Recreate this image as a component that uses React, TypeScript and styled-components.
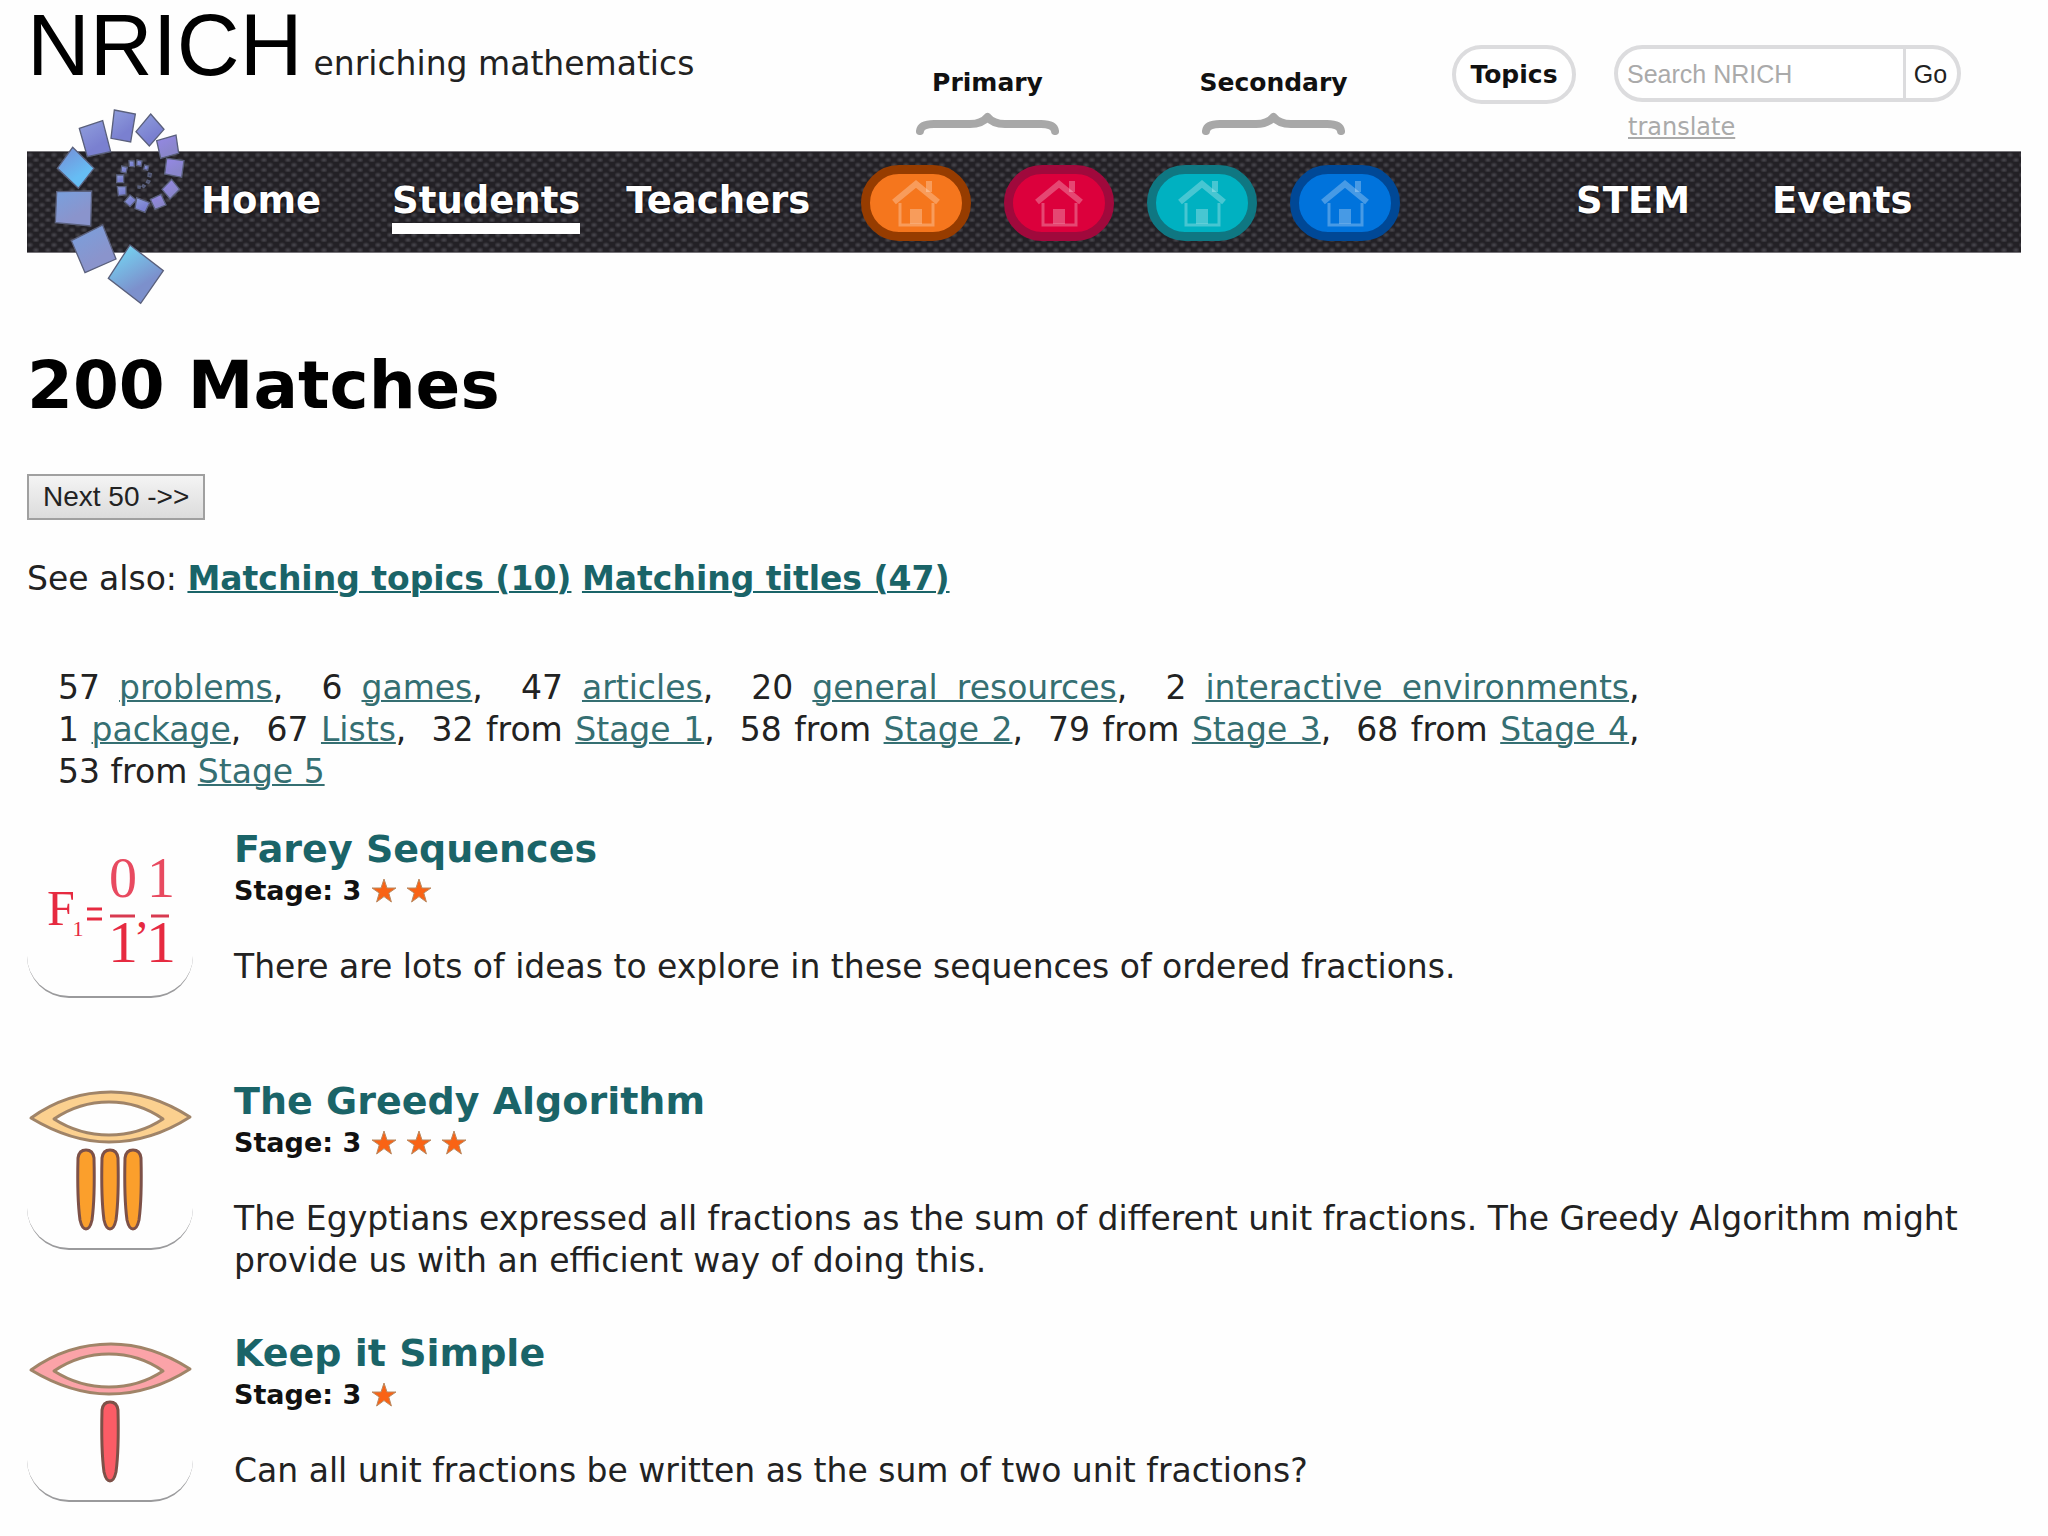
import React from "react";
import styled, { createGlobalStyle } from "styled-components";

const teal = "#1a6468";
const sans = `"DejaVu Sans", Verdana, sans-serif`;
const arial = `"Liberation Sans", Arial, sans-serif`;

const GlobalStyle = createGlobalStyle`
  *, *::before, *::after { box-sizing: border-box; }
  body { margin: 0; background: #fefefe; color: #222; font-family: ${sans}; font-size: 33px; line-height: 42px; }
`;

const Page = styled.div`
  padding: 0 27px;
`;

const headerColumns = "minmax(0, 1fr) 539px 621px";

const Header = styled.header`
  display: grid;
  grid-template-columns: ${headerColumns};
  height: 151px;
`;

const Brand = styled.div`
  display: flex;
  align-items: baseline;
  gap: 11px;
  padding-top: 1px;
  white-space: nowrap;
`;

const BrandName = styled.span`
  font: 87px/88px ${arial};
  color: #000;
`;

const Phases = styled.div`
  display: grid;
  grid-template-columns: 1fr 1fr;
  column-gap: 33px;
  padding-top: 62px;
`;

const Phase = styled.div`
  display: flex;
  flex-direction: column;
  align-items: center;
  gap: 7px;
  color: #111;
  font-size: 25px;
  font-weight: bold;
  line-height: 42px;
`;

const Tools = styled.div`
  display: flex;
  align-items: flex-start;
  gap: 38px;
  padding: 45px 0 0 52px;
`;

const TopicsButton = styled.button`
  width: 124px;
  height: 59px;
  padding: 0;
  border: 4px solid #dcdcde;
  border-radius: 30px;
  background: #fff;
  color: #111;
  font: bold 25px/50px ${sans};
`;

const SearchForm = styled.form`
  display: flex;
  width: 347px;
  height: 57px;
  border: 4px solid #dcdcde;
  border-radius: 29px;
  background: #fff;
  overflow: hidden;
`;

const SearchInput = styled.input`
  flex: 1;
  min-width: 0;
  padding: 0 0 0 9px;
  border: 0;
  background: transparent;
  font: 25px/48px ${arial};
  color: #222;
  &::placeholder { color: #aaa; opacity: 1; }
`;

const GoButton = styled.button`
  width: 54px;
  padding: 0 6px 0 4px;
  border: 0;
  border-left: 3px solid #dcdcde;
  background: transparent;
  color: #222;
  font: 25px/48px ${arial};
`;

const Translate = styled.a`
  display: block;
  padding-left: 14px;
  color: #aaa;
  font-size: 24px;
  line-height: 50px;
`;

const Nav = styled.nav`
  position: relative;
  display: grid;
  grid-template-columns: ${headerColumns};
  height: 102px;
  border: solid #77757a;
  border-width: 1px 0;
  background-color: #232126;
  background-image:
    radial-gradient(ellipse 4px 3px at 3px 3px, #4c4a51, transparent),
    radial-gradient(ellipse 4px 3px at 9px 8px, #4c4a51, transparent);
  background-size: 12px 10px;
`;

const NavGroup = styled.div<{ $start: number; $gap: number }>`
  display: flex;
  align-items: flex-start;
  gap: ${(p) => p.$gap}px;
  padding: 27px 0 0 ${(p) => p.$start}px;
`;

const NavLink = styled.a<{ $active?: boolean; $wide?: boolean }>`
  margin-right: ${(p) => (p.$wide ? 25 : 0)}px;
  border-bottom: 11px solid ${(p) => (p.$active ? "#fff" : "transparent")};
  color: #fff;
  font-size: 37px;
  font-weight: bold;
  line-height: 44px;
  text-decoration: none;
  text-shadow: 0 0 3px #000;
`;

const Stages = styled.div`
  display: flex;
  gap: 33px;
  padding-top: 13px;
`;

const StagePill = styled.a<{ $fill: string; $rim: string }>`
  display: flex;
  justify-content: center;
  align-items: center;
  width: 110px;
  height: 76px;
  border: 9px solid ${(p) => p.$rim};
  border-radius: 38px;
  background: ${(p) => p.$fill};
`;

const Swirl = styled.svg`
  position: absolute;
  left: 3px;
  top: -62px;
  width: 180px;
  height: 230px;
`;

const Title = styled.h1`
  margin: 95px 0 50px;
  color: #000;
  font-size: 66px;
  line-height: 76px;
`;

const NextButton = styled.button`
  display: block;
  height: 46px;
  padding: 0 14px;
  border: 2px solid #a0a0a0;
  background: linear-gradient(#f4f4f4, #dcdcdc);
  color: #222;
  font: 28px/40px ${arial};
`;

const SeeAlso = styled.p`
  margin: 38px 0 0;
`;

const Link = styled.a<{ $strong?: boolean }>`
  color: ${(p) => (p.$strong ? teal : "#356f72")};
  font-weight: ${(p) => (p.$strong ? "bold" : "normal")};
  text-decoration-thickness: 2px;
`;

const Stats = styled.p`
  max-width: 1625px;
  margin: 67px 0 35px;
  padding: 0 2px 0 31px;
  text-align: justify;
`;

const Stat = styled.span`
  white-space: nowrap;
`;

const Results = styled.main`
  display: grid;
  row-gap: 50px;
`;

const Result = styled.article`
  display: grid;
  grid-template-columns: 166px minmax(0, 1fr);
  column-gap: 41px;
  align-items: start;
  min-height: 202px;
`;

const Thumb = styled.svg`
  width: 166px;
  height: 170px;
  border-bottom: 2px solid #9a9a9c;
  border-radius: 0 0 42px 42px;
`;

const ResultTitle = styled.h2`
  margin: 0;
  font-size: 38px;
  line-height: 42px;
`;

const TitleLink = styled.a`
  color: ${teal};
  text-decoration: none;
`;

const StageLine = styled.div`
  display: flex;
  align-items: center;
  gap: 11px;
  color: #111;
  font-size: 27px;
  font-weight: bold;
`;

const Summary = styled.p`
  margin: 34px 0 0;
`;

const Brace = () => (
  <svg width="143" height="24" viewBox="0 0 143 24" aria-hidden="true">
    <path d="M4 20Q5 13 18 13H54Q66 13 71.5 6Q77 13 89 13H125Q138 13 139 20" fill="none" stroke="#a8a8a8" strokeWidth="8" strokeLinecap="round" strokeLinejoin="round" />
  </svg>
);

const House = () => (
  <svg width="48" height="47" viewBox="0 0 48 47" fill="none" stroke="#fff" strokeOpacity="0.28" aria-hidden="true">
    <path d="M2 22L24 4L46 22" strokeWidth="6" />
    <path d="M37 1V12" strokeWidth="6" />
    <path d="M8 23V45H41V23" strokeWidth="3" />
    <path d="M18 29H30V44H18Z" fill="#fff" fillOpacity="0.28" stroke="none" />
  </svg>
);

const Star = () => (
  <svg width="24" height="24" viewBox="0 0 24 24" aria-hidden="true">
    <path d="M12 0L15 9H24L16.8 14L19.4 23L12 17.6L4.6 23L7.2 14L0 9H9Z" fill="#f96315" stroke="#b98a62" strokeWidth="1" />
  </svg>
);

const tiles: [string, string][] = [
  ["300,465 400,542 332,640 235,565", "bright"],
  ["218,405 258,507 165,548 124,452", "blue"],
  ["80,305 185,303 182,408 76,398", "blue"],
  ["128,172 192,235 145,295 82,235", "sky"],
  ["148,115 218,92 242,185 172,200", "indigo"],
  ["253,60 316,72 302,156 243,145", "indigo"],
  ["362,72 402,118 358,168 318,125", "indigo"],
  ["438,135 446,190 392,205 380,152", "violet"],
  ["410,205 462,212 455,262 404,252", "violet"],
  ["425,268 449,298 420,327 396,298", "violet"],
  ["393,313 408,345 375,358 361,328", "violet"],
  ["320,323 359,338 345,367 315,356", "indigo"],
  ["300,315 319,330 300,350 283,335", "indigo"],
  ["262,290 288,290 288,314 265,317", "indigo"],
  ["260,255 281,255 281,278 260,278", "indigo"],
  ["275,228 292,232 288,249 273,246", "indigo"],
  ["297,212 312,213 313,230 298,229", "indigo"],
  ["321,210 336,213 333,229 320,226", "indigo"],
  ["344,225 356,228 353,241 341,238", "indigo"],
  ["355,249 364,251 362,261 354,259", "slate"],
  ["352,270 360,273 356,280 349,277", "slate"],
  ["339,284 346,288 341,293 336,289", "slate"],
  ["324,288 331,289 330,295 324,294", "slate"],
];

const gradients: [string, string, string][] = [
  ["bright", "#74d8f4", "#7c90cc"],
  ["blue", "#7a9fdc", "#8a94cc"],
  ["sky", "#7590d8", "#66bdf4"],
  ["indigo", "#8e9cdc", "#7a80d0"],
  ["violet", "#9488e4", "#8a86cc"],
  ["slate", "#5a6080", "#42465c"],
];

const Logo = () => (
  <Swirl viewBox="0 0 540 690" role="img" aria-label="NRICH">
    <defs>
      {gradients.map(([id, from, to]) => (
        <linearGradient key={id} id={id} x1="0.2" y1="0" x2="0.6" y2="0.7">
          <stop offset="0" stopColor={from} />
          <stop offset="1" stopColor={to} />
        </linearGradient>
      ))}
    </defs>
    {tiles.map(([points, fill]) => (
      <polygon key={points} points={points} fill={`url(#${fill})`} stroke="#5a607c" strokeWidth="4" />
    ))}
  </Swirl>
);

const FareyThumb = () => (
  <Thumb viewBox="0 0 166 168" fill="#e62a40" fontFamily='"Liberation Serif", "Times New Roman", serif' textAnchor="middle" aria-hidden="true">
    <text x="34" y="97" fontSize="50">F</text>
    <text x="51" y="108" fontSize="22">1</text>
    <path d="M60 81H75M60 91H75" stroke="#e62a40" strokeWidth="3" />
    <text x="96" y="69" fontSize="56" fill="#e84a60">0</text>
    <text x="134" y="69" fontSize="56" fill="#e84a60">1</text>
    <path d="M83 88H108M124 88H142" stroke="#d83a50" strokeWidth="3" />
    <text x="96" y="134" fontSize="60">1</text>
    <text x="134" y="134" fontSize="60">1</text>
    <text x="115" y="99" fontSize="48">,</text>
  </Thumb>
);

const EyeThumb = ({ bars, eye, bar }: { bars: number[]; eye: string; bar: string }) => (
  <Thumb viewBox="0 0 166 168" aria-hidden="true">
    <path
      d="M4 38Q40 12 84 12Q124 12 163 37Q124 62 82 62Q44 62 4 38ZM27 39Q52 55 82 55Q112 55 136 39Q112 22 82 22Q52 22 27 39Z"
      fill={eye} fillRule="evenodd" stroke="#a08468" strokeWidth="3" strokeLinejoin="round"
    />
    {bars.map((x) => (
      <path key={x} d={`M${x - 8} 78Q${x - 7} 70 ${x} 70Q${x + 7} 70 ${x + 8} 78Q${x + 9} 118 ${x + 6} 140Q${x + 4} 149 ${x} 149Q${x - 4} 149 ${x - 6} 140Q${x - 9} 118 ${x - 8} 78Z`} fill={bar} stroke="#7d5148" strokeWidth="3" />
    ))}
  </Thumb>
);

const pills = [
  { label: "Lower primary", fill: "#f5761d", rim: "#963c00" },
  { label: "Upper primary", fill: "#dc003c", rim: "#a0093c" },
  { label: "Lower secondary", fill: "#00b1c1", rim: "#0f7782" },
  { label: "Upper secondary", fill: "#0073dc", rim: "#004896" },
];

const stats: [string, string][] = [
  ["57", "problems"], ["6", "games"], ["47", "articles"], ["20", "general resources"], ["2", "interactive environments"],
  ["1", "package"], ["67", "Lists"], ["32 from", "Stage 1"], ["58 from", "Stage 2"], ["79 from", "Stage 3"],
  ["68 from", "Stage 4"], ["53 from", "Stage 5"],
];

const results = [
  { title: "Farey Sequences", stars: 2, thumb: <FareyThumb />, text: "There are lots of ideas to explore in these sequences of ordered fractions." },
  { title: "The Greedy Algorithm", stars: 3, thumb: <EyeThumb bars={[59, 83, 106]} eye="#fbd08f" bar="#fb9f2c" />, text: "The Egyptians expressed all fractions as the sum of different unit fractions. The Greedy Algorithm might provide us with an efficient way of doing this." },
  { title: "Keep it Simple", stars: 1, thumb: <EyeThumb bars={[83]} eye="#fba3a8" bar="#fb5c66" />, text: "Can all unit fractions be written as the sum of two unit fractions?" },
];

export default function App() {
  return (
    <Page>
      <GlobalStyle />
      <Header>
        <Brand>
          <BrandName>NRICH</BrandName>
          <span>enriching mathematics</span>
        </Brand>
        <Phases>
          <Phase>Primary<Brace /></Phase>
          <Phase>Secondary<Brace /></Phase>
        </Phases>
        <Tools>
          <TopicsButton type="button">Topics</TopicsButton>
          <div>
            <SearchForm onSubmit={(e) => e.preventDefault()}>
              <SearchInput type="text" aria-label="Search NRICH" placeholder="Search NRICH" />
              <GoButton type="submit">Go</GoButton>
            </SearchForm>
            <Translate href="#translate">translate</Translate>
          </div>
        </Tools>
      </Header>
      <Nav>
        <Logo />
        <NavGroup $start={174} $gap={46}>
          <NavLink href="#home" $wide>Home</NavLink>
          <NavLink href="#students" $active>Students</NavLink>
          <NavLink href="#teachers">Teachers</NavLink>
        </NavGroup>
        <Stages>
          {pills.map((p) => (
            <StagePill key={p.label} href="#stage" aria-label={p.label} $fill={p.fill} $rim={p.rim}>
              <House />
            </StagePill>
          ))}
        </Stages>
        <NavGroup $start={176} $gap={82}>
          <NavLink href="#stem">STEM</NavLink>
          <NavLink href="#events">Events</NavLink>
        </NavGroup>
      </Nav>
      <Title>200 Matches</Title>
      <NextButton type="button">Next 50 -&gt;&gt;</NextButton>
      <SeeAlso>
        See also: <Link href="#topics" $strong>Matching topics (10)</Link> <Link href="#titles" $strong>Matching titles (47)</Link>
      </SeeAlso>
      <Stats>
        {stats.map(([count, name], i) => (
          <React.Fragment key={name}>
            <Stat>{count} <Link href="#filter">{name}</Link>{i < stats.length - 1 && ","}</Stat>
            {i < stats.length - 1 && "\u00a0 "}
          </React.Fragment>
        ))}
      </Stats>
      <Results>
        {results.map((r) => (
          <Result key={r.title}>
            {r.thumb}
            <div>
              <ResultTitle><TitleLink href="#result">{r.title}</TitleLink></ResultTitle>
              <StageLine>
                Stage: 3
                {Array.from({ length: r.stars }, (_, i) => <Star key={i} />)}
              </StageLine>
              <Summary>{r.text}</Summary>
            </div>
          </Result>
        ))}
      </Results>
    </Page>
  );
}
